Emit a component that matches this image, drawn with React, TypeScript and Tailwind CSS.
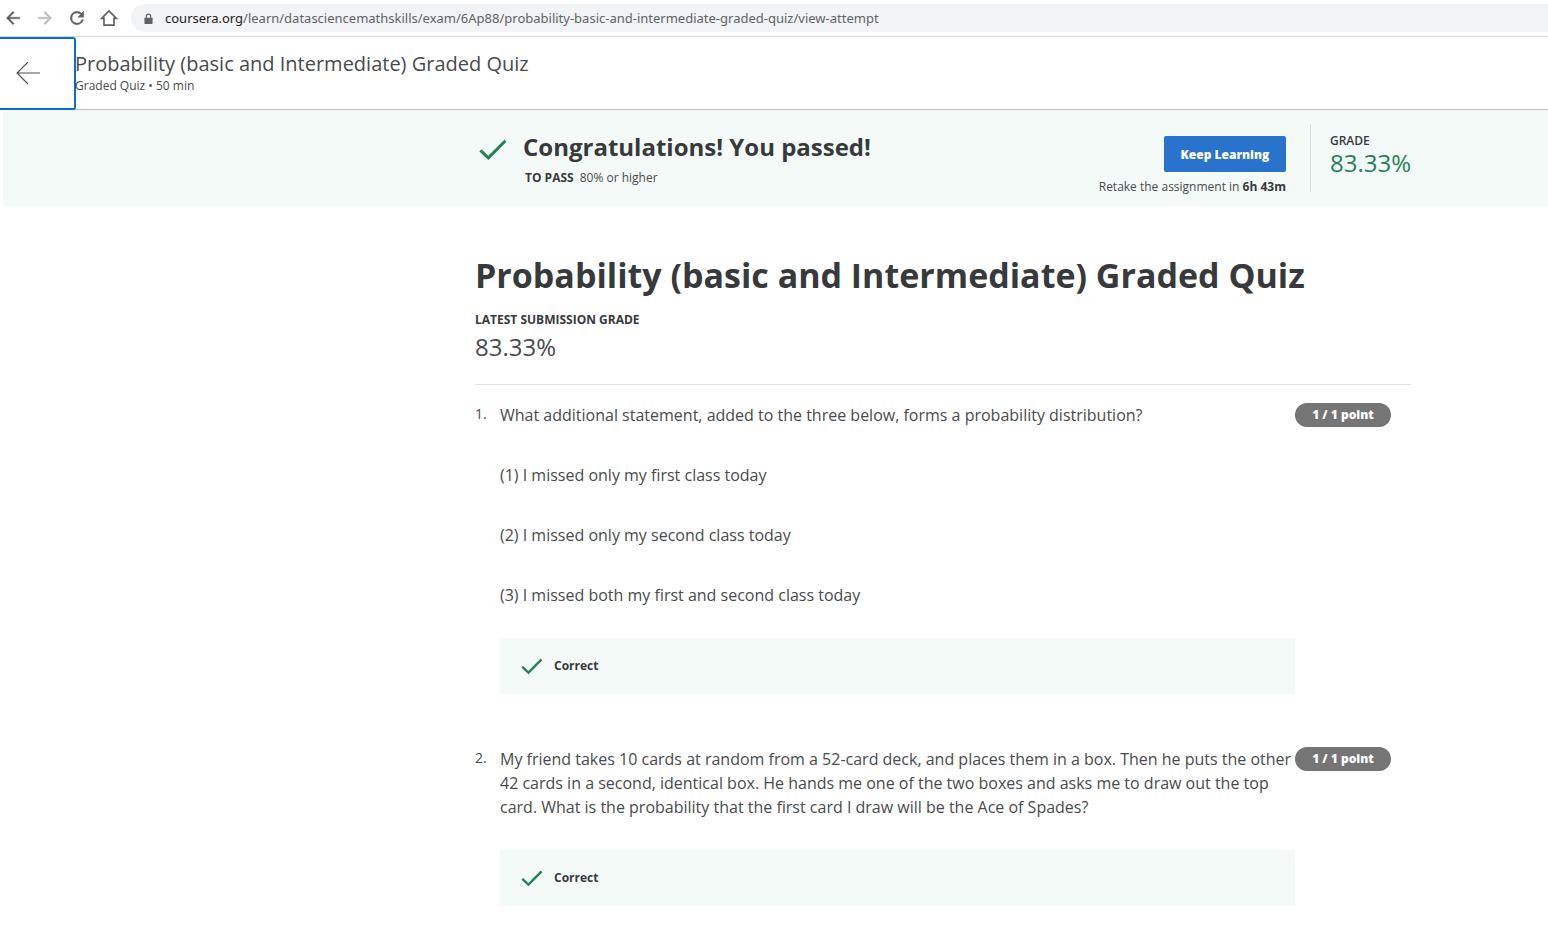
import type { ReactNode } from "react";

const urlPath =
  "/learn/datasciencemathskills/exam/6Ap88/probability-basic-and-intermediate-graded-quiz/view-attempt";

const quizTitle = "Probability (basic and Intermediate) Graded Quiz";

type Question = { paragraphs: string[]; points: string };

const questions: Question[] = [
  {
    paragraphs: [
      "What additional statement, added to the three below, forms a probability distribution?",
      "(1) I missed only my first class today",
      "(2) I missed only my second class today",
      "(3) I missed both my first and second class today",
    ],
    points: "1 / 1 point",
  },
  {
    paragraphs: [
      "My friend takes 10 cards at random from a 52-card deck, and places them in a box. Then he puts the other 42 cards in a second, identical box. He hands me one of the two boxes and asks me to draw out the top card. What is the probability that the first card I draw will be the Ace of Spades?",
    ],
    points: "1 / 1 point",
  },
];

function Check({ className }: { className: string }) {
  return (
    <svg viewBox="0 0 28 22" className={className} fill="none" aria-hidden="true">
      <path d="M1.4 11.4 L9.4 18.8 L26.4 1.8" stroke="#1f8354" strokeWidth="3" />
    </svg>
  );
}

function ToolButton({ label, color, children }: { label: string; color: string; children: ReactNode }) {
  return (
    <button type="button" aria-label={label} className={color}>
      <svg viewBox="0 0 24 24" className="size-5" fill="currentColor" aria-hidden="true">
        {children}
      </svg>
    </button>
  );
}

function BrowserBar() {
  return (
    <div className="flex h-[37px] items-center border-b border-[#dadce0] bg-white pl-[3px]">
      <div className="flex gap-3">
        <ToolButton label="Back" color="text-[#5f6368]">
          <path d="M20 11H7.83l5.59-5.59L12 4l-8 8 8 8 1.41-1.41L7.83 13H20v-2z" stroke="currentColor" strokeWidth="0.5" />
        </ToolButton>
        <ToolButton label="Forward" color="text-[#babcbe]">
          <path d="M12 4l-1.41 1.41L16.17 11H4v2h12.17l-5.58 5.59L12 20l8-8z" stroke="currentColor" strokeWidth="0.5" />
        </ToolButton>
        <ToolButton label="Reload" color="text-[#5f6368]">
          <path d="M17.65 6.35A7.96 7.96 0 0 0 12 4a8 8 0 1 0 7.73 10h-2.08A6 6 0 1 1 12 6c1.66 0 3.14.69 4.22 1.78L13 11h7V4l-2.35 2.35z" stroke="currentColor" strokeWidth="0.6" />
        </ToolButton>
        <ToolButton label="Home" color="text-[#5f6368]">
          <path d="M12 3.4 3.2 12.4H6V20.6H18V12.4H20.8Z" fill="none" stroke="currentColor" strokeWidth="2" />
        </ToolButton>
      </div>
      <a
        href="#quiz"
        className="ml-3 flex h-7 flex-1 items-center rounded-l-full bg-[#f1f3f4] pt-px pl-[13px] font-['Noto_Sans',sans-serif] text-[13px] text-[#5f6368]"
      >
        <svg viewBox="0 0 10 12" className="mr-3 h-3 w-[9px]" aria-hidden="true">
          <rect x="0.5" y="4.5" width="9" height="7" rx="0.8" fill="#5f6368" />
          <path d="M2.6 5V2.9a2.4 2.4 0 0 1 4.8 0V5" fill="none" stroke="#5f6368" strokeWidth="1.3" />
        </svg>
        <span className="whitespace-nowrap">
          <span className="text-[#202124]">coursera.org</span>
          {urlPath}
        </span>
      </a>
    </div>
  );
}

function Header() {
  return (
    <header className="flex h-[73px] border-b border-[#bdbdbd] bg-white">
      <button
        type="button"
        aria-label="Back to course"
        className="-mb-px flex w-[76px] items-center rounded-r-[3px] border-2 border-l-0 border-[#0a6bd1] pl-4"
      >
        <svg viewBox="0 0 24 24" className="size-6" fill="none" stroke="#4a4d50" aria-hidden="true">
          <path d="M24 11H1M12 0L1 11L12 22" strokeWidth="1.1" />
        </svg>
      </button>
      <div className="-ml-px pt-3 text-[#484b4d]">
        <h2 className="text-[20px] leading-[30px]">{quizTitle}</h2>
        <p className="text-[12px] leading-[14px]">Graded Quiz • 50 min</p>
      </div>
    </header>
  );
}

function Banner() {
  return (
    <section className="ml-[3px] h-24 bg-[#f4faf8] pl-[472px]">
      <div className="flex max-w-[936px] pt-[14px]">
        <Check className="ml-1 mt-[15px] h-[22px] w-7" />
        <div className="ml-4 pt-[7px]">
          <h2 className="text-[24px] leading-8 font-bold">Congratulations! You passed!</h2>
          <p className="ml-0.5 mt-1.5 text-[12px] leading-[18px] text-[#484b4d]">
            <strong className="mr-1.5 text-[#373a3c]">TO PASS</strong>80% or higher
          </p>
        </div>
        <div className="ml-auto flex flex-col items-end pt-3">
          <button
            type="button"
            className="h-9 w-[122px] rounded-xs bg-[#2a73cc] pt-px text-[12px] font-extrabold text-white"
          >
            Keep Learning
          </button>
          <p className="mt-1.5 text-[12px] leading-[18px] text-[#484b4d]">
            Retake the assignment in <strong className="text-[#373a3c]">6h 43m</strong>
          </p>
        </div>
        <div className="ml-6 h-[68px] border-l border-[#dcdfde] pl-[19px] pt-2">
          <p className="text-[12px] leading-[18px] font-semibold">GRADE</p>
          <p className="text-[24px] leading-[26px] text-[#1f8354]">83.33%</p>
        </div>
      </div>
    </section>
  );
}

function QuestionItem({ question, index }: { question: Question; index: number }) {
  return (
    <li className="flex items-start">
      <span className="w-[25px] shrink-0 text-[14px] leading-[22px] text-[#484b4d]">{index}.</span>
      <div className="min-w-0 flex-1">
        <div className="flex flex-col gap-9 text-[16px] leading-6 text-[#484b4d]">
          {question.paragraphs.map((text) => (
            <p key={text}>{text}</p>
          ))}
        </div>
        <div className="mt-[31px] flex h-14 items-center bg-[#f4faf8] pl-[21px] text-[12px] font-bold">
          <Check className="mr-[11px] h-[17px] w-[22px]" />
          Correct
        </div>
      </div>
      <span className="mr-5 flex h-6 w-24 items-center justify-center rounded-full bg-[#757575] text-[12px] font-extrabold text-white">
        {question.points}
      </span>
    </li>
  );
}

export default function App() {
  return (
    <div className="min-h-screen bg-white font-['Open_Sans',sans-serif] text-[#373a3c]">
      <BrowserBar />
      <Header />
      <Banner />
      <main id="quiz" className="pl-[475px] pt-11">
        <div className="max-w-[936px]">
          <h1 className="text-[34px] leading-[50px] font-bold">{quizTitle}</h1>
          <p className="mt-[11px] text-[12px] leading-[18px] font-bold">LATEST SUBMISSION GRADE</p>
          <p className="mt-1 text-[24px] leading-7 text-[#484b4d]">83.33%</p>
          <hr className="mt-[23px] border-[#e0e0e0]" />
          <ol className="mt-[18px] flex flex-col gap-[53px]">
            {questions.map((question, i) => (
              <QuestionItem key={question.paragraphs[0]} question={question} index={i + 1} />
            ))}
          </ol>
        </div>
      </main>
    </div>
  );
}
